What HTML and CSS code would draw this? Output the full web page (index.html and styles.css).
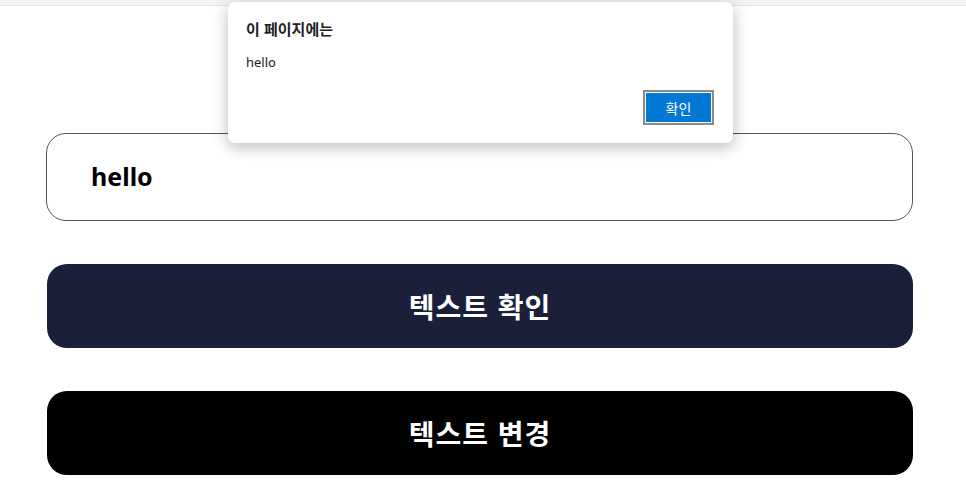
FILE: index.html
```html
<!DOCTYPE html>
<html lang="ko">
<head>
    <meta charset="UTF-8">
    <meta name="viewport" content="width=device-width, initial-scale=1.0">
    <title>텍스트 확인</title>
    <link rel="stylesheet" href="styles.css">
</head>
<body>
    <div class="top-bar"></div>

    <main class="container">
        <input type="text" class="text-input" value="hello">
        <button type="button" class="btn btn-check">텍스트 확인</button>
        <button type="button" class="btn btn-change">텍스트 변경</button>
    </main>

    <div class="alert-box">
        <div class="alert-title">이 페이지에는</div>
        <div class="alert-message">hello</div>
        <div class="alert-actions">
            <button type="button" class="alert-ok">확인</button>
        </div>
    </div>
</body>
</html>
```

FILE: styles.css
```css
body {
    margin: 0;
    background-color: #fff;
    font-family: "Noto Sans", "Noto Sans CJK KR", sans-serif;
}
.top-bar {
    height: 5px;
    background-color: #f3f3f3;
    border-bottom: 1px solid #e3e3e3;
}
.container {
    display: flex;
    flex-direction: column;
    gap: 43px;
    padding: 127px 53px 0 46px;
}
.text-input {
    box-sizing: border-box;
    height: 88px;
    padding: 0 0 2px 44px;
    border: 1px solid #555;
    border-radius: 20px;
    font-family: "Noto Sans", "Noto Sans CJK KR", sans-serif;
    font-size: 25px;
    font-weight: bold;
    color: #000;
    outline: none;
}
.btn {
    box-sizing: border-box;
    height: 84px;
    margin-left: 1px;
    border: none;
    border-radius: 20px;
    color: #fff;
    font-family: "Noto Sans CJK KR", sans-serif;
    font-size: 28px;
    font-weight: bold;
    letter-spacing: 1px;
    cursor: pointer;
}
.btn-check {
    background-color: #1a2039;
}
.btn-change {
    background-color: #000;
}

/* 브라우저 알림창 */
.alert-box {
    position: absolute;
    top: 2px;
    left: 228px;
    width: 505px;
    height: 141px;
    box-sizing: border-box;
    padding: 17px 18px 0 18px;
    background-color: #fff;
    border-radius: 7px;
    box-shadow: 0 4px 16px rgba(0, 0, 0, 0.28);
    font-family: "Noto Sans CJK KR", sans-serif;
    color: #202124;
}
.alert-title {
    font-size: 15px;
    font-weight: bold;
    line-height: 20px;
}
.alert-message {
    margin-top: 15px;
    font-family: "Noto Sans", sans-serif;
    font-size: 13px;
    line-height: 16px;
}
.alert-actions {
    display: flex;
    justify-content: flex-end;
    margin-top: 20px;
    padding-right: 1px;
}
.alert-ok {
    width: 71px;
    height: 35px;
    border: 2px solid #8a8a8a;
    outline: 1px solid #fff;
    outline-offset: -3px;
    background-color: #0078d4;
    color: #fff;
    font-family: "Noto Sans CJK KR", sans-serif;
    font-size: 14px;
    padding: 0;
}
```
